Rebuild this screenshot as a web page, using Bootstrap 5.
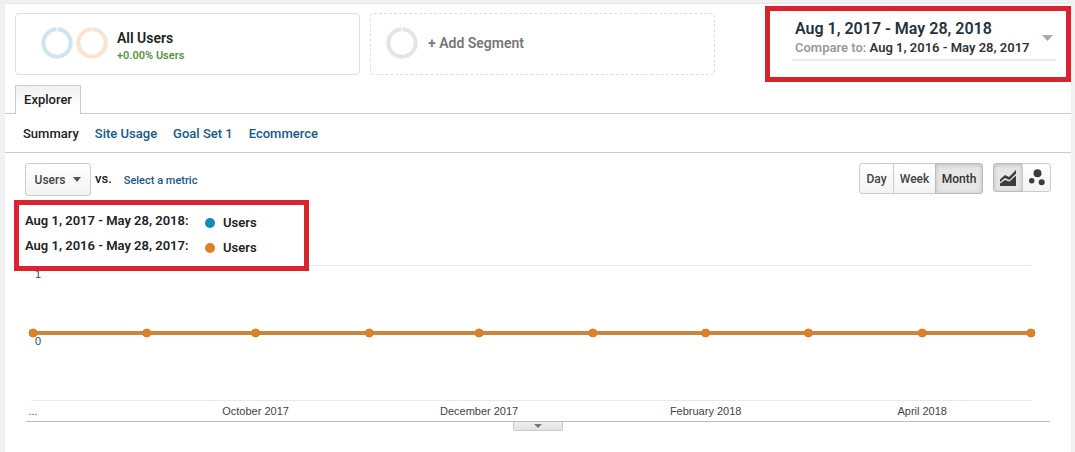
<!DOCTYPE html>
<html lang="en">
<head>
<meta charset="utf-8">
<meta name="viewport" content="width=device-width, initial-scale=1">
<title>Explorer</title>
<link href="https://cdn.jsdelivr.net/npm/bootstrap@5.3.0/dist/css/bootstrap.min.css" rel="stylesheet">
<style>
  body { background: #f1f1f1; font-family: Roboto, "Liberation Sans", sans-serif; font-size: 13px; line-height: 16px; font-weight: 500; color: #222; }
  a { color: #15598c; text-decoration: none; }
  button { font-weight: 500; }
  .report { background: #fff; border-top: 1px solid #e6e6e6; margin: 3px 4px 0 5px; min-height: calc(100vh - 3px); }
  .report-head { padding: 2px 0 0 10px; }
  .segments { margin-top: 7px; gap: 10px; }
  .segment { height: 62px; width: 345px; border: 1px solid #dedede; border-radius: 4px; background: #fff; text-align: left; }
  .segment-add { border-style: dashed; color: #777; font-size: 14px; font-weight: 600; padding: 0 0 2px 15px; }
  .segment-on { padding: 0 0 2px 25px; }
  .segment-text { padding: 7px 0 0 8px; }
  .segment-name { font-size: 14px; line-height: 18px; font-weight: 600; color: #222; }
  .segment-share { font-size: 11px; line-height: 18px; font-weight: 600; color: #559440; }
  .marked { border: 5px solid #d9232e; background: #fff; }
  .dates { width: 306px; height: 76px; padding: 7px 10px 0 22px; }
  .date-button { width: 264px; height: 43px; border: 0; border-bottom: 2px solid #ebebeb; background: none; padding: 1px 3px 0; text-align: left; color: #222; }
  .date-range { font-size: 16px; line-height: 20px; font-weight: 600; color: #26323b; }
  .compare { color: #999; line-height: 17px; font-weight: 600; }
  .compare b { color: #333; font-weight: 600; }
  .tabs { border-bottom: 1px solid #ccc; padding: 3px 0 0 10px; }
  .tab { border: 1px solid #ccc; border-bottom: 0; background: linear-gradient(#f1f1f1, #fff 80%); height: 29px; width: 66px; margin-bottom: -1px; padding: 0; color: #222; }
  .subnav { height: 39px; padding: 2px 0 0 18px; gap: 16px; border-bottom: 1px solid #ccc; }
  .subnav a[aria-current] { color: #222; }
  .toolbar { padding: 10px 20px 0; }
  .tool { border: 1px solid #ccc; background: linear-gradient(#fff, #f3f3f3); color: #444; font-size: 12px; padding: 0; }
  .tool.active { background: #e6e6e6; border-color: #bbb; box-shadow: inset 0 1px 4px #bbb; color: #333; }
  .metric { width: 66px; height: 33px; border-radius: 3px; gap: 8px; }
  .periods .tool { height: 31px; }
  .kinds { margin-left: 10px; }
  .kinds .tool { height: 29px; width: 29px; }
  .kinds .tool:first-child { width: 30px; }
  .kinds .tool:last-child, .periods .tool + .tool { margin-left: -1px; }
  .periods .tool:first-child, .kinds .tool:first-child { border-radius: 3px 0 0 3px; }
  .periods .tool:last-child, .kinds .tool:last-child { border-radius: 0 3px 3px 0; }
  .day { width: 35px; } .week { width: 43px; } .month { width: 48px; }
  .select-metric { font-size: 11px; line-height: 20px; }
  .legend-box { width: 295px; height: 71px; margin: 4px 0 0 9px; padding: 5px 6px; position: relative; z-index: 1; }
  .legend-row { height: 25px; }
  .legend-row span:first-child { width: 180px; height: 20px; font-weight: 600; }
  .legend-row span:last-child { font-weight: 600; }
  .dot { width: 10px; height: 10px; border-radius: 50%; margin-right: 8px; }
  .now { background: #128dba; } .before { background: #e07f23; }
  .plot { height: 156px; margin: -6px 40px 0 28px; }
  .plot svg { overflow: visible; font-family: "Liberation Sans", sans-serif; font-size: 11px; font-weight: 400; }
  .drawer { margin: 0 21px; border-top: 1px solid #bbb; }
  .drawer button { width: 50px; height: 9px; border: 1px solid #ccc; border-top: 0; border-radius: 0 0 2px 2px; background: linear-gradient(#eee, #e2e2e2); padding: 0; }
</style>
<script src="https://cdn.jsdelivr.net/npm/bootstrap@5.3.0/dist/js/bootstrap.bundle.min.js"></script>
</head>
<body>
<main class="report">
  <header class="report-head d-flex justify-content-between">
    <div class="segments d-flex">
      <button class="segment segment-on d-flex align-items-center" type="button">
        <svg width="68" height="32" fill="none" stroke-width="4" aria-hidden="true">
          <circle cx="16" cy="16" r="13.7" stroke="#cfe4ef"/><circle cx="51" cy="16" r="13.7" stroke="#fae3cf"/>
          <path d="M16 0v5M51 0v5" stroke="#fff" stroke-width="1"/>
        </svg>
        <span class="segment-text d-flex flex-column"><span class="segment-name">All Users</span><span class="segment-share">+0.00% Users</span></span>
      </button>
      <button class="segment segment-add d-flex align-items-center" type="button">
        <svg width="34" height="32" fill="none" aria-hidden="true"><circle cx="16" cy="16" r="13.7" stroke="#e4e4e4" stroke-width="4"/><path d="M16 0v5" stroke="#fff"/></svg>
        <span class="ps-2">+ Add Segment</span>
      </button>
    </div>
    <div class="marked dates">
      <button class="date-button d-flex justify-content-between align-items-start" type="button">
        <span class="d-flex flex-column"><span class="date-range">Aug 1, 2017 - May 28, 2018</span><span class="compare">Compare to: <b>Aug 1, 2016 - May 28, 2017</b></span></span>
        <svg class="mt-3" width="11" height="6" aria-hidden="true"><path d="M0 0h11L5.500 6z" fill="#aaa"/></svg>
      </button>
    </div>
  </header>
  <div class="tabs d-flex"><button class="tab" type="button">Explorer</button></div>
  <nav class="subnav d-flex align-items-center" aria-label="Report views">
    <a href="#" aria-current="page">Summary</a><a href="#">Site Usage</a><a href="#">Goal Set 1</a><a href="#">Ecommerce</a>
  </nav>
  <div class="toolbar d-flex align-items-start">
    <button class="tool metric d-flex align-items-center justify-content-center" type="button">Users <svg width="8" height="5" aria-hidden="true"><path d="M0 0h8L4 5z" fill="#555"/></svg></button>
    <span class="mx-1 mt-2">vs.</span><a class="select-metric mt-2 ms-2" href="#">Select a metric</a>
    <div class="periods d-flex ms-auto" role="group" aria-label="Period">
      <button class="tool day" type="button">Day</button><button class="tool week" type="button">Week</button><button class="tool month active" type="button">Month</button>
    </div>
    <div class="kinds d-flex" role="group" aria-label="Chart type">
      <button class="tool active d-flex align-items-center justify-content-center" type="button" aria-label="Line chart"><svg width="16" height="16" aria-hidden="true"><path d="M0 9.500 5 5l4 2L16 0v3.500L9.500 10 5 8 0 12zM0 13.500l5-3.500 4.500 1.500L16 5.500V16H0z" fill="#3c3c3c"/></svg></button>
      <button class="tool d-flex align-items-center justify-content-center" type="button" aria-label="Motion chart"><svg width="16" height="17" fill="#3c3c3c" aria-hidden="true"><circle cx="8.500" cy="4.200" r="4"/><circle cx="2.700" cy="11.700" r="2.700"/><circle cx="12.700" cy="13.200" r="3"/></svg></button>
    </div>
  </div>
  <div class="marked legend-box">
    <div class="legend-row d-flex align-items-center"><span>Aug 1, 2017 - May 28, 2018:</span><i class="dot now"></i><span>Users</span></div>
    <div class="legend-row d-flex align-items-center"><span>Aug 1, 2016 - May 28, 2017:</span><i class="dot before"></i><span>Users</span></div>
  </div>
  <section class="plot" aria-label="Users by month">
    <svg width="100%" height="156" fill="#444">
      <line x1="0" x2="100%" y1=".5" y2=".5" stroke="#e8e8e8"/><line x1="0" x2="100%" y1="135.500" y2="135.500" stroke="#e8e8e8"/>
      <line x1="0" x2="100%" y1="68" y2="68" stroke="#ce8539" stroke-width="4"/>
      <g fill="#e07f23" stroke="#cf8030">
        <circle cx="0" cy="68" r="4"/><circle cx="11.400%" cy="68" r="4"/><circle cx="22.300%" cy="68" r="4"/><circle cx="33.700%" cy="68" r="4"/><circle cx="44.700%" cy="68" r="4"/><circle cx="56.100%" cy="68" r="4"/><circle cx="67.400%" cy="68" r="4"/><circle cx="77.700%" cy="68" r="4"/><circle cx="89.100%" cy="68" r="4"/><circle cx="100%" cy="68" r="4"/>
      </g>
      <text x="2" y="13">1</text><text x="2" y="80">0</text>
      <g text-anchor="middle"><text x="0" y="150">...</text><text x="22.300%" y="150">October 2017</text><text x="44.700%" y="150">December 2017</text><text x="67.400%" y="150">February 2018</text><text x="89.100%" y="150">April 2018</text></g>
    </svg>
  </section>
  <div class="drawer d-flex justify-content-center"><button class="d-flex align-items-center justify-content-center" type="button" aria-label="Show annotations"><svg width="8" height="4" aria-hidden="true"><path d="M0 0h8L4 4z" fill="#777"/></svg></button></div>
</main>
</body>
</html>
